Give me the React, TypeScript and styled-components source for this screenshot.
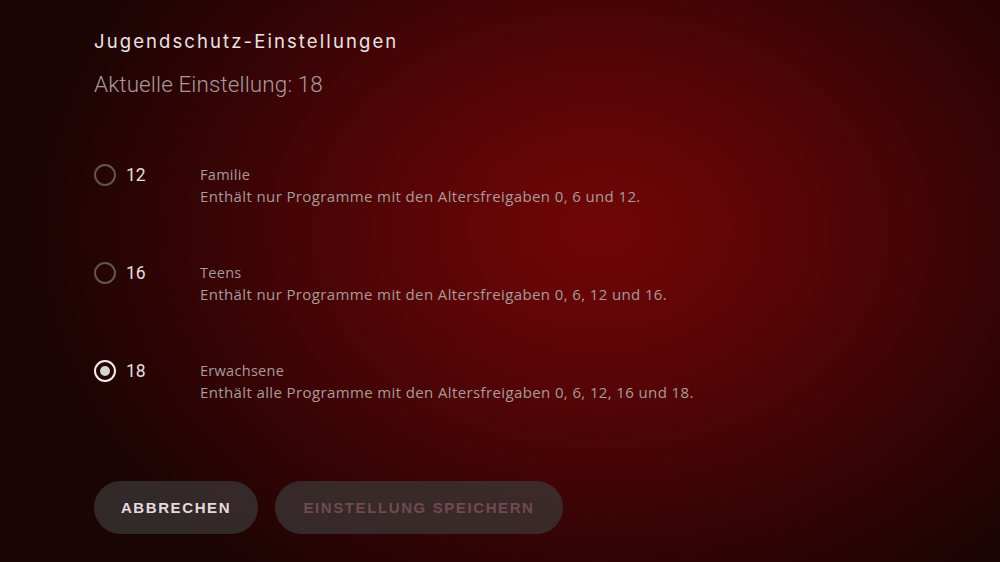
import React from "react";
import styled, { createGlobalStyle } from "styled-components";

const Global = createGlobalStyle`
  html, body { margin: 0; padding: 0; }
  body { width: 1000px; height: 562px; overflow: hidden; background: #1a0404; }
  * { box-sizing: border-box; }
`;

const Screen = styled.div`
  width: 1000px;
  height: 562px;
  background: radial-gradient(ellipse 580px 440px at 600px 230px, #700607 0%, #5c0506 30%, #3a0405 65%, #1a0404 100%);
  padding: 30px 0 0 94px;
  font-family: Roboto, "Open Sans", sans-serif;
  display: flex;
  flex-direction: column;
`;

const Title = styled.h1`
  margin: 0;
  font-family: Inter, Roboto, sans-serif;
  font-size: 18.5px;
  font-weight: 400;
  letter-spacing: 2.1px;
  color: #ece2e2;
  line-height: 22px;
`;

const Subtitle = styled.div`
  margin-top: 19px;
  font-size: 22.5px;
  font-weight: 300;
  color: #a89a9a;
  line-height: 26px;
  letter-spacing: 0.1px;
`;

const List = styled.div`
  margin-top: 68px;
  display: flex;
  flex-direction: column;
  gap: 54px;
`;

const Row = styled.div`
  display: grid;
  grid-template-columns: 32px 74px 1fr;
  align-items: start;
  height: 44px;
`;

const Radio = styled.span<{ $on?: boolean }>`
  width: 22px;
  height: 22px;
  border-radius: 50%;
  margin-top: -1px;
  border: 2px solid ${(p) => (p.$on ? "#f2eeee" : "#5e5656")};
  display: flex;
  align-items: center;
  justify-content: center;
  &::after {
    content: "";
    width: 10px;
    height: 10px;
    border-radius: 50%;
    background: ${(p) => (p.$on ? "#d8d2d2" : "transparent")};
  }
`;

const Num = styled.span`
  font-size: 17.5px;
  color: #e6dede;
  line-height: 22px;
  margin-top: -1px;
`;

const Texts = styled.div`
  display: flex;
  flex-direction: column;
  gap: 2px;
`;

const Label = styled.span`
  font-family: "Open Sans", Roboto, sans-serif;
  font-size: 14.5px;
  letter-spacing: 0.3px;
  color: #a99b9b;
  line-height: 19px;
`;

const Desc = styled.span`
  font-family: "Open Sans", Roboto, sans-serif;
  font-size: 15px;
  letter-spacing: 0.38px;
  color: #a99b9b;
  line-height: 21px;
`;

const Buttons = styled.div`
  margin-top: 76px;
  display: flex;
  gap: 17px;
`;

const Button = styled.button<{ $disabled?: boolean; $w: number }>`
  width: ${(p) => p.$w}px;
  height: 53px;
  border-radius: 27px;
  border: none;
  background: rgba(60, 56, 56, 0.72);
  font-family: "Liberation Sans", Arial, sans-serif;
  font-weight: 700;
  font-size: 15px;
  letter-spacing: 1.6px;
  color: ${(p) => (p.$disabled ? "#6f4b51" : "#e4dcdc")};
  padding: 0;
`;

const options = [
  { n: "12", label: "Familie", desc: "Enthält nur Programme mit den Altersfreigaben 0, 6 und 12." },
  { n: "16", label: "Teens", desc: "Enthält nur Programme mit den Altersfreigaben 0, 6, 12 und 16." },
  { n: "18", label: "Erwachsene", desc: "Enthält alle Programme mit den Altersfreigaben 0, 6, 12, 16 und 18.", on: true },
];

export default function App() {
  return (
    <>
      <Global />
      <Screen>
        <Title>Jugendschutz-Einstellungen</Title>
        <Subtitle>Aktuelle Einstellung: 18</Subtitle>
        <List>
          {options.map((o) => (
            <Row key={o.n}>
              <Radio $on={o.on} />
              <Num>{o.n}</Num>
              <Texts>
                <Label>{o.label}</Label>
                <Desc>{o.desc}</Desc>
              </Texts>
            </Row>
          ))}
        </List>
        <Buttons>
          <Button $w={164}>ABBRECHEN</Button>
          <Button $w={288} $disabled>EINSTELLUNG SPEICHERN</Button>
        </Buttons>
      </Screen>
    </>
  );
}
